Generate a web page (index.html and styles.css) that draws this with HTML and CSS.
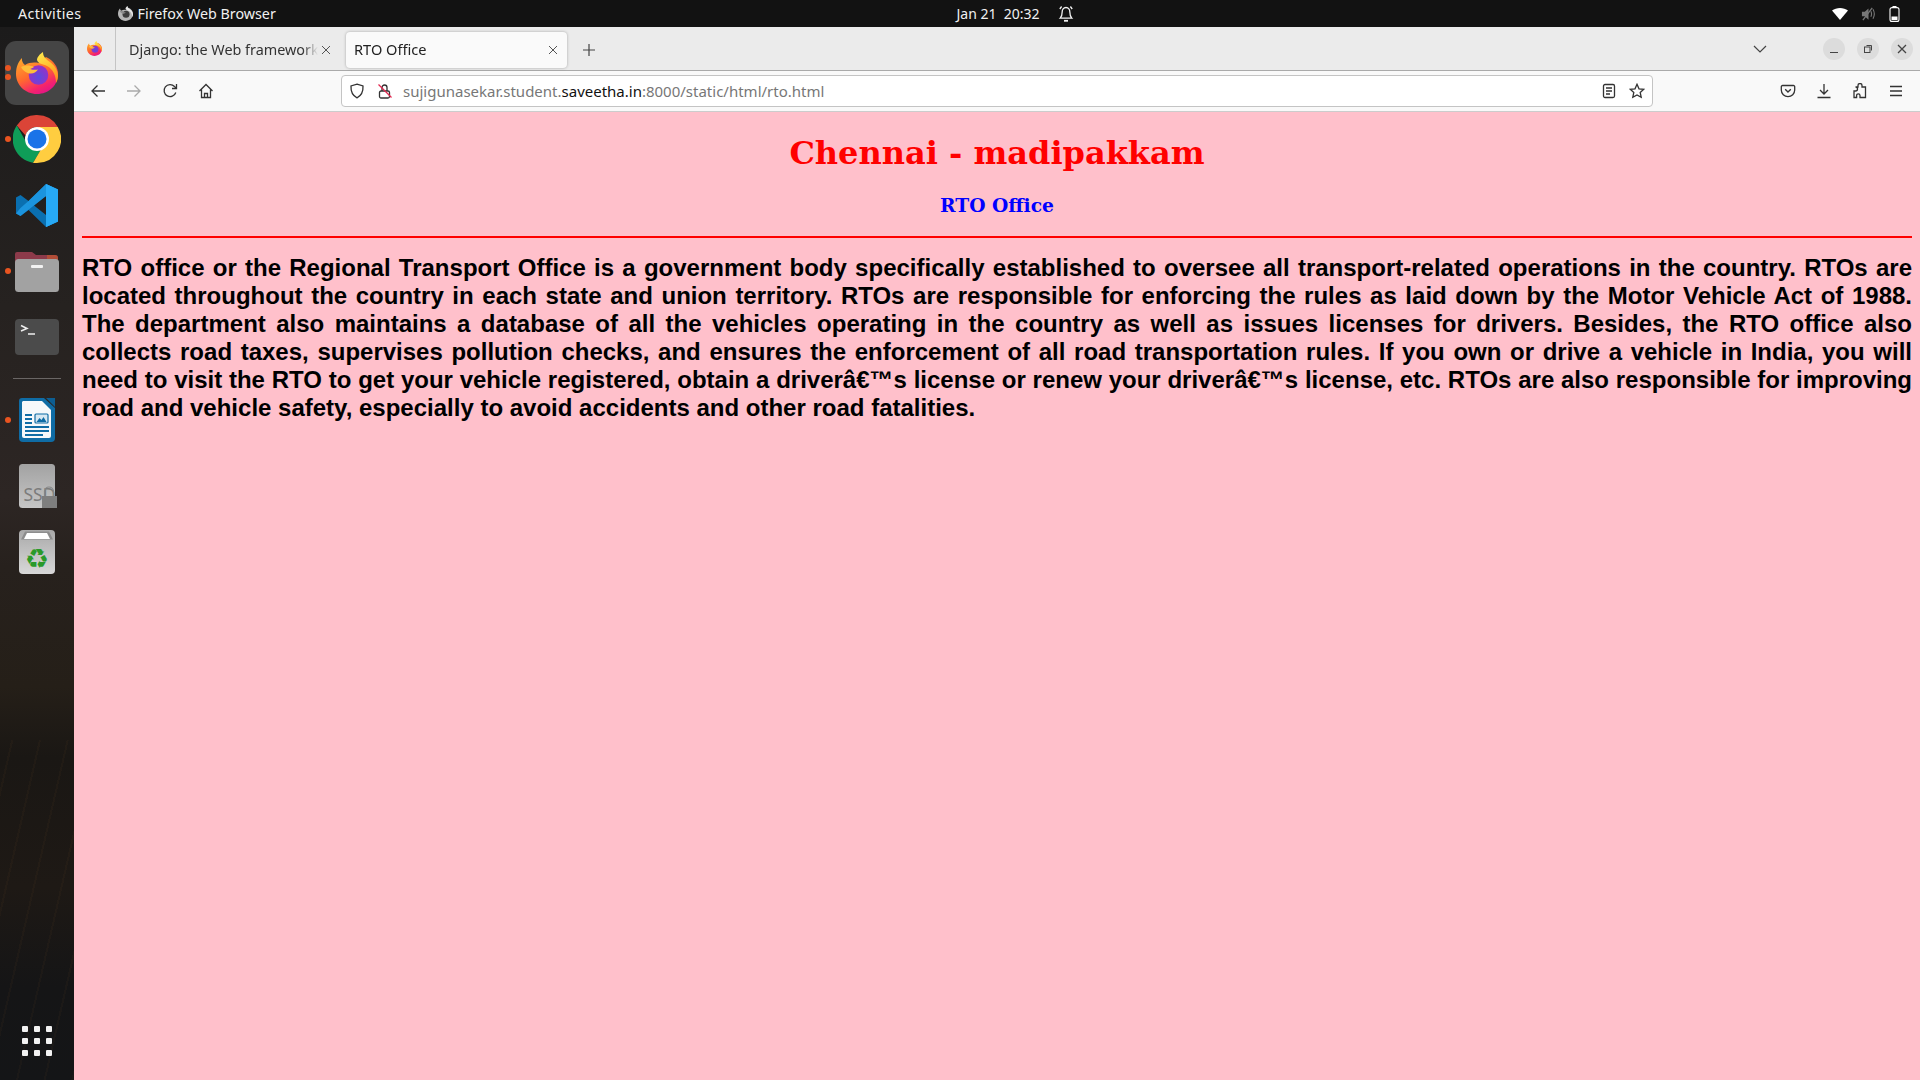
FILE: index.html
```html
<!DOCTYPE html>
<html lang="en">
<head>
  <meta charset="UTF-8">
  <meta name="viewport" content="width=device-width, initial-scale=1.0">
  <title>RTO Office</title>
  <link rel="stylesheet" href="styles.css">
</head>
<body>

  <svg class="defs" aria-hidden="true">
    <defs>
      <linearGradient id="fx-base" x1="0.15" y1="0.1" x2="0.65" y2="1">
        <stop offset="0" stop-color="#ffa02c"/>
        <stop offset="0.45" stop-color="#ff6a2e"/>
        <stop offset="0.8" stop-color="#f5256a"/>
        <stop offset="1" stop-color="#e31587"/>
      </linearGradient>
      <linearGradient id="fx-flame" x1="0.3" y1="0" x2="0.7" y2="1">
        <stop offset="0" stop-color="#ffe64a"/>
        <stop offset="0.6" stop-color="#ffb52a"/>
        <stop offset="1" stop-color="#ff8a20"/>
      </linearGradient>
      <radialGradient id="fx-globe" cx="0.5" cy="0.6" r="0.6">
        <stop offset="0" stop-color="#5b4be0"/>
        <stop offset="1" stop-color="#9a2fc4"/>
      </radialGradient>
      <linearGradient id="disk" x1="0" y1="0" x2="0" y2="1">
        <stop offset="0" stop-color="#a2a2a2"/>
        <stop offset="1" stop-color="#c6c6c6"/>
      </linearGradient>
      <linearGradient id="bin" x1="0" y1="0" x2="0" y2="1">
        <stop offset="0" stop-color="#a9a9a9"/>
        <stop offset="1" stop-color="#d8d8d8"/>
      </linearGradient>

      <symbol id="firefox" viewBox="0 0 42 42">
        <path fill="url(#fx-base)" d="M6 6C5.500 9 7 11.500 9 13c4-2.500 9-3 14-2l7-6c8 4 12 10 12 17 0 11.600-9.400 20-21 20S0 33 0 22C0 15 2 10 6 6z"/>
        <path fill="url(#fx-flame)" d="M27 0c0 5 3 7 7 10 5 4 8 8 8 14 0 3-1 5-2 7 0-7-3-14-9-17-4-2-9-2-10-6 0-3 3-6 6-8z"/>
        <circle cx="22.500" cy="23" r="9.800" fill="url(#fx-globe)"/>
        <path fill="#ffbe3a" d="M5 15c4-2 9-2 13 0-1.500 1-3 1.500-4 2 3 1 6 1 8 .5-2 2.500-4 4-7 4-4 0-8-2.500-10-6.500z"/>
      </symbol>

      <symbol id="firefox-mono" viewBox="0 0 42 42">
        <path fill="#b5b5b5" d="M6 6C5.500 9 7 11.500 9 13c4-2.500 9-3 14-2l7-6c8 4 12 10 12 17 0 11.600-9.400 20-21 20S0 33 0 22C0 15 2 10 6 6z"/>
        <path fill="#e6e6e6" d="M27 0c0 5 3 7 7 10 5 4 8 8 8 14 0 3-1 5-2 7 0-7-3-14-9-17-4-2-9-2-10-6 0-3 3-6 6-8z"/>
        <circle cx="22.500" cy="23" r="9.800" fill="#3c3c3c"/>
        <path fill="#8c8c8c" d="M5 15c4-2 9-2 13 0-1.500 1-3 1.500-4 2 3 1 6 1 8 .5-2 2.500-4 4-7 4-4 0-8-2.500-10-6.500z"/>
      </symbol>
    </defs>
  </svg>

  <header class="topbar">
    <div class="topbar-left">
      <span class="activities">Activities</span>
      <span class="app-menu">
        <svg class="app-menu-icon"><use href="#firefox-mono"/></svg>
        Firefox Web Browser
      </span>
    </div>
    <div class="clock">
      <span>Jan 21&nbsp; 20:32</span>
      <svg class="bell" viewBox="0 0 16 18" fill="none" stroke="#f2f2f2" stroke-width="1.300">
        <path d="M8 2.500c-2.600 0-3.800 2-3.800 4.300 0 3-.7 5-2 6.400h11.600c-1.300-1.400-2-3.400-2-6.400 0-2.300-1.200-4.300-3.800-4.300z"/>
        <path d="M6 15.800h4" stroke-width="1.800"/>
        <path d="M3.600 1.500 1.800 4M12.400 1.500 14.200 4"/>
      </svg>
    </div>
    <div class="tray">
      <svg class="wifi" viewBox="0 0 16 12"><path fill="#fff" d="M0 2.600C2.200.9 5 0 8 0s5.800.9 8 2.600L8 12z"/></svg>
      <svg class="volume" viewBox="0 0 16 14" fill="none" stroke="#777">
        <path fill="#777" stroke="none" d="M1 4.500h3L8 1v12L4 9.500H1z"/>
        <path d="M10.500 4c1 2 1 4 0 6M12.800 2c1.700 3 1.700 7 0 10" stroke-width="1.200"/>
        <path d="M2 13.500 12 .5" stroke-width="1.400"/>
      </svg>
      <svg class="battery" viewBox="0 0 11 16" fill="none">
        <path d="M3.500.5h4" stroke="#fff"/>
        <rect x="1" y="1.600" width="9" height="13.800" rx="2" stroke="#fff" stroke-width="1.100"/>
        <rect x="2.500" y="10.500" width="6" height="3.500" fill="#fff"/>
      </svg>
    </div>
  </header>

  <div class="desktop">
    <aside class="dock">
      <div class="dock-item active">
        <i class="run-dot"></i><i class="run-dot"></i>
        <svg class="icon-firefox"><use href="#firefox"/></svg>
      </div>
      <div class="dock-item">
        <i class="run-dot"></i>
        <svg class="icon-chrome" viewBox="0 0 48 48">
          <path fill="#db4437" d="M24 0a24 24 0 0 1 20.800 12H24a12 12 0 0 0-11.500 8.500L3.800 10.500A24 24 0 0 1 24 0z"/>
          <path fill="#0f9d58" d="M3.800 10.500 14 28.500a12 12 0 0 0 13.500 7.100L20 47.700A24 24 0 0 1 3.800 10.500z"/>
          <path fill="#ffcd40" d="M44.800 12A24 24 0 0 1 24 48h-4l10-17a12 12 0 0 0-6-19z"/>
          <circle cx="24" cy="24" r="12" fill="#fff"/>
          <circle cx="24" cy="24" r="9.500" fill="#1a73e8"/>
        </svg>
      </div>
      <div class="dock-item">
        <svg class="icon-code" viewBox="0 0 42 43">
          <path fill="#0a6fb0" d="M30 0 12.500 17 4.500 11 0 13.500v16L4.500 32l8-6L30 43l12-5.500v-32zM30 12v19l-12-9.500z"/>
          <path fill="#1f9be6" d="M30 0l12 5.500v32L30 43zM0 29.500l4.500 2.500L30 12V0L12.500 17 4.500 24z" opacity=".85"/>
          <path fill="#27a9f5" d="M30 0l12 5.500v32L30 43z"/>
        </svg>
      </div>
      <div class="dock-item">
        <i class="run-dot"></i>
        <svg class="icon-files" viewBox="0 0 44 41">
          <path fill="#8c3a4a" d="M2 1h15l4 3h19a3 3 0 0 1 3 3v20H0V3a2 2 0 0 1 2-2z"/>
          <path fill="#c0562f" d="M32 4h8a3 3 0 0 1 3 3v20H32z" opacity=".7"/>
          <rect x="0" y="8" width="44" height="33" rx="3.500" fill="#a2a2a2"/>
          <rect x="16" y="14" width="12" height="3" rx="1" fill="#f2f2f2"/>
        </svg>
      </div>
      <div class="dock-item">
        <svg class="icon-term" viewBox="0 0 44 36">
          <rect width="44" height="36" rx="4" fill="#4b4b4b"/>
          <path d="M6 6.500 12 9.500 6 12" fill="none" stroke="#eee" stroke-width="1.500"/>
          <path d="M13 15h7" stroke="#eee" stroke-width="1.500"/>
        </svg>
      </div>
      <hr class="dock-sep">
      <div class="dock-item">
        <i class="run-dot"></i>
        <svg class="icon-writer" viewBox="0 0 36 44">
          <path fill="#0f6ca5" d="M3 0h22l11 10v30a4 4 0 0 1-4 4H4a4 4 0 0 1-4-4V3a3 3 0 0 1 3-3z"/>
          <path fill="#0d5e92" d="M27 0h9v9z"/>
          <path fill="#f6f8fa" d="M4 3h19l9 9v26a2 2 0 0 1-2 2H5a2 2 0 0 1-2-2V4z"/>
          <g fill="#0f6ca5">
            <rect x="6" y="16" width="7" height="2"/><rect x="6" y="20" width="7" height="2"/>
            <rect x="6" y="24" width="7" height="2"/><rect x="6" y="28" width="24" height="2"/>
            <rect x="6" y="32" width="24" height="2"/><rect x="6" y="36" width="18" height="2"/>
          </g>
          <rect x="16" y="16" width="13" height="9" rx="1" fill="#d8e8f2" stroke="#0f6ca5" stroke-width="1.200"/>
          <path fill="#0f6ca5" d="M17.500 24l3-4 2 2 2-3 3 5z"/>
        </svg>
      </div>
      <div class="dock-item">
        <svg class="icon-ssd" viewBox="0 0 38 44">
          <rect width="36" height="44" rx="3.500" fill="url(#disk)"/>
          <text x="4.500" y="37" class="ssd-label">SSD</text>
          <path d="M25.500 32v-4.500a4.500 4.500 0 0 1 9 0V32" fill="none" stroke="#858585" stroke-width="1.200"/>
          <rect x="23" y="32" width="15" height="12" fill="#7e7e7e"/>
        </svg>
      </div>
      <div class="dock-item">
        <svg class="icon-trash" viewBox="0 0 36 44">
          <rect width="36" height="44" rx="4" fill="url(#bin)"/>
          <path d="M6 1.500h24l4 8H2z" fill="#8d8d8d"/>
          <path d="M8 3h20l3 6H5z" fill="#fff"/>
          <text x="18" y="38" class="recycle">♻</text>
        </svg>
      </div>
      <div class="app-grid">
        <i></i><i></i><i></i><i></i><i></i><i></i><i></i><i></i><i></i>
      </div>
    </aside>

    <div class="browser">
      <div class="tabbar">
        <div class="tab-fav"><svg class="fav-icon"><use href="#firefox"/></svg></div>
        <div class="tab">
          <span class="tab-title">Django: the Web framework</span>
          <svg class="tab-close" viewBox="0 0 10 10"><path d="M1 1l8 8M9 1 1 9"/></svg>
        </div>
        <div class="tab current">
          <span class="tab-title">RTO Office</span>
          <svg class="tab-close" viewBox="0 0 10 10"><path d="M1 1l8 8M9 1 1 9"/></svg>
        </div>
        <svg class="new-tab" viewBox="0 0 12 12"><path d="M6 0v12M0 6h12"/></svg>
        <svg class="tab-list" viewBox="0 0 14 8"><path d="M1 1l6 6 6-6"/></svg>
        <div class="win-btns">
          <span class="win-btn"><svg viewBox="0 0 12 12"><path d="M2 9.500h8"/></svg></span>
          <span class="win-btn"><svg viewBox="0 0 12 12"><rect x="2.500" y="4" width="5.500" height="5.500"/><path d="M4.500 2.500h5v5"/></svg></span>
          <span class="win-btn"><svg viewBox="0 0 12 12"><path d="M2 2l8 8M10 2l-8 8" stroke-width="1.300"/></svg></span>
        </div>
      </div>

      <div class="toolbar">
        <svg class="tool back" viewBox="0 0 16 16"><path d="M15 8H2M7.500 2.500 2 8l5.500 5.500"/></svg>
        <svg class="tool forward" viewBox="0 0 16 16"><path d="M1 8h13M8.500 2.500 14 8l-5.500 5.500"/></svg>
        <svg class="tool reload" viewBox="0 0 16 16"><path d="M13.800 9.500A6 6 0 1 1 12.500 3.500L14 5"/><path d="M14.500 1v4.500H10"/></svg>
        <svg class="tool home" viewBox="0 0 16 16"><path d="M1.500 8 8 1.500 14.500 8M3.500 6.500V14.500h9V6.500M6.500 14.500v-4h3v4"/></svg>
        <div class="urlbar">
          <svg class="url-icon" viewBox="0 0 16 16"><path d="M8 1.200 14 3c.3 5.500-1.500 9.500-6 11.800C3.500 12.500 1.700 8.500 2 3z"/></svg>
          <svg class="url-icon lock" viewBox="0 0 16 16">
            <rect x="2.500" y="8" width="10" height="7" rx="1.500"/>
            <path d="M5 8V4.500a2.500 2.500 0 0 1 5 0V8"/>
            <path class="lock-slash" d="M1.500 1.500l13 13"/>
          </svg>
          <span class="url-text">sujigunasekar.student.<b>saveetha.in</b>:8000/static/html/rto.html</span>
          <svg class="tool reader" viewBox="0 0 16 16"><rect x="2.500" y="1.500" width="11" height="13" rx="1.500"/><path d="M5 5h6M5 8h6M5 11h4"/></svg>
          <svg class="tool star" viewBox="0 0 16 16"><path d="M8 1.300l2 4.500 4.800.5-3.600 3.200 1 4.800L8 11.900l-4.200 2.400 1-4.800L1.200 6.300 6 5.800z"/></svg>
        </div>
        <svg class="tool pocket" viewBox="0 0 16 16"><path d="M2.500 2.500h11a1.200 1.200 0 0 1 1.200 1.200V7a6.700 6.700 0 0 1-13.400 0V3.700a1.200 1.200 0 0 1 1.200-1.200z"/><path d="M5.200 6.200 8 9l2.800-2.800"/></svg>
        <svg class="tool download" viewBox="0 0 16 16"><path d="M8 1v9.500M4 7l4 4 4-4M1.500 14.500h13"/></svg>
        <svg class="tool extensions" viewBox="0 0 16 16"><path d="M6 2.500a2 2 0 0 1 4 0V4h3.500v10.500H8v-2a1.700 1.700 0 0 0-3.400 0v2H2V8h1.500a2 2 0 0 0 0-4H6z"/></svg>
        <svg class="tool menu" viewBox="0 0 16 16"><path d="M2 3.500h12M2 8h12M2 12.500h12"/></svg>
      </div>

      <main class="page">
        <h1>Chennai - madipakkam</h1>
        <h3>RTO Office</h3>
        <hr class="rule">
        <h2>RTO office or the Regional Transport Office is a government body specifically established to oversee all transport-related operations in the country. RTOs are located throughout the country in each state and union territory. RTOs are responsible for enforcing the rules as laid down by the Motor Vehicle Act of 1988. The&nbsp;department also maintains a database of all the vehicles operating in the country as well as issues licenses for drivers. Besides, the RTO office also collects road taxes, supervises pollution checks, and ensures the enforcement of all road transportation rules. If you own or drive a vehicle in India, you will need to visit the RTO to get your vehicle registered, obtain a driverâ€™s license or renew your driverâ€™s license, etc. RTOs are also responsible for improving road and vehicle safety, especially to avoid accidents and other road fatalities.</h2>
      </main>
    </div>
  </div>

</body>
</html>
```

FILE: styles.css
```css
html, body {
  margin: 0;
  height: 100%;
}
body {
  display: flex;
  flex-direction: column;
  overflow: hidden;
  font-family: "Noto Sans", sans-serif;
  background: #121212;
}
.defs {
  position: absolute;
  width: 0;
  height: 0;
}

/* top bar */
.topbar {
  height: 27px;
  flex: none;
  display: grid;
  grid-template-columns: 1fr auto 1fr;
  align-items: center;
  background: #121212;
  color: #f0f0f0;
  font-size: 14.300px;
}
.topbar-left {
  display: flex;
  align-items: center;
  padding-left: 18px;
  gap: 36px;
}
.activities {
  letter-spacing: .4px;
}
.app-menu {
  display: flex;
  align-items: center;
  gap: 5px;
}
.app-menu-icon {
  width: 15px;
  height: 15px;
}
.clock {
  display: flex;
  align-items: center;
  gap: 18px;
  margin-left: 110px;
  font-size: 14px;
}
.bell {
  width: 16px;
  height: 18px;
}
.tray {
  display: flex;
  justify-content: flex-end;
  align-items: center;
  gap: 13px;
  padding-right: 20px;
}
.wifi {
  width: 16px;
  height: 12px;
}
.volume {
  width: 15px;
  height: 14px;
}
.battery {
  width: 11px;
  height: 16px;
}

.desktop {
  flex: 1;
  display: flex;
  min-height: 0;
}

/* dock */
.dock {
  width: 74px;
  flex: none;
  display: flex;
  flex-direction: column;
  align-items: center;
  padding-top: 13px;
  box-sizing: border-box;
  background:
    repeating-linear-gradient(103deg, transparent 0 11px, rgba(120, 78, 36, .07) 11px 13px, transparent 13px 27px) 0 100% / 100% 340px no-repeat,
    linear-gradient(180deg, #1c1b1b 0, #262220 280px, #2d2624 470px, #27211d 540px, #251f18 660px, #1a1714 730px, #1e1915 860px, #151516 960px, #141517 100%);
}
.dock-item {
  position: relative;
  width: 74px;
  height: 66px;
  flex: none;
  display: flex;
  align-items: center;
  justify-content: center;
}
.dock-item.active::before {
  content: "";
  position: absolute;
  left: 5px;
  top: 1px;
  width: 64px;
  height: 64px;
  border-radius: 11px;
  background: #454545;
}
.dock-item svg {
  position: relative;
}
.run-dot {
  position: absolute;
  left: 5px;
  top: 30px;
  width: 6px;
  height: 6px;
  border-radius: 50%;
  background: #e95420;
}
.run-dot:first-child:nth-last-child(3) {
  top: 25px;
}
.run-dot:nth-child(2):nth-last-child(2) {
  top: 34px;
}
.icon-firefox {
  width: 42px;
  height: 42px;
}
.icon-chrome {
  width: 48px;
  height: 48px;
}
.icon-code {
  width: 42px;
  height: 43px;
}
.icon-files {
  width: 44px;
  height: 41px;
}
.icon-term {
  width: 44px;
  height: 36px;
}
.icon-writer {
  width: 36px;
  height: 44px;
}
.icon-ssd {
  width: 38px;
  height: 44px;
  margin-left: 2px;
}
.ssd-label {
  font-family: "Noto Sans", sans-serif;
  font-size: 17.500px;
  fill: #7c7c7c;
}
.icon-trash {
  width: 36px;
  height: 44px;
}
.recycle {
  font-family: "DejaVu Sans", sans-serif;
  font-size: 27px;
  text-anchor: middle;
  fill: #2a9a2a;
}
.dock-sep {
  width: 48px;
  height: 1px;
  margin: 8px 0;
  flex: none;
  border: 0;
  background: #6a6665;
}
.app-grid {
  margin-top: auto;
  margin-bottom: 24px;
  display: grid;
  grid-template-columns: repeat(3, 6px);
  grid-auto-rows: 6px;
  gap: 6px;
}
.app-grid i {
  border-radius: 1px;
  background: #f2f2f2;
}

/* browser */
.browser {
  flex: 1;
  min-width: 0;
  display: flex;
  flex-direction: column;
}
.tabbar {
  height: 43px;
  flex: none;
  display: flex;
  align-items: center;
  background: #ebebeb;
  border-bottom: 1px solid #aaa;
  font-size: 14.400px;
  color: #333;
}
.tab-fav {
  width: 42px;
  align-self: stretch;
  display: flex;
  align-items: center;
  justify-content: center;
  border-right: 1px solid #c4c4c4;
  box-sizing: border-box;
}
.fav-icon {
  width: 15px;
  height: 15px;
}
.tab {
  width: 222px;
  height: 36px;
  flex: none;
  box-sizing: border-box;
  display: flex;
  align-items: center;
  gap: 3px;
  margin-top: 2px;
  padding: 0 7px 0 13px;
}
.tab.current {
  width: 221px;
  margin-left: 8px;
  padding: 0 9px 0 8px;
  border-radius: 4px;
  background: #fafafa;
  box-shadow: 0 0 3px rgba(0, 0, 0, .3);
  color: #222;
  font-size: 14.600px;
}
.tab-title {
  flex: 1;
  min-width: 0;
  padding-bottom: 1px;
  white-space: nowrap;
  -webkit-mask-image: linear-gradient(90deg, #000 92%, transparent);
  mask-image: linear-gradient(90deg, #000 92%, transparent);
}
.tab-close {
  width: 10px;
  height: 10px;
  flex: none;
  fill: none;
  stroke: #555;
}
.new-tab {
  width: 12px;
  height: 12px;
  margin-top: 2px;
  margin-left: 16px;
  fill: none;
  stroke: #444;
  stroke-width: 1.200;
}
.tab-list {
  width: 14px;
  height: 8px;
  margin-left: auto;
  fill: none;
  stroke: #444;
  stroke-width: 1.200;
}
.win-btns {
  display: flex;
  gap: 12px;
  margin-left: 56px;
  margin-right: 7px;
}
.win-btn {
  width: 22px;
  height: 22px;
  border-radius: 50%;
  background: #dcdcdc;
  display: flex;
  align-items: center;
  justify-content: center;
}
.win-btn svg {
  width: 12px;
  height: 12px;
  fill: none;
  stroke: #444;
}

.toolbar {
  height: 41px;
  flex: none;
  box-sizing: border-box;
  display: flex;
  align-items: center;
  padding-left: 16px;
  background: #f9f9f9;
  border-bottom: 1px solid #ccc;
}
.tool {
  width: 16px;
  height: 16px;
  flex: none;
  fill: none;
  stroke: #333;
  stroke-width: 1.300;
}
.forward {
  stroke: #aaa;
  margin-left: 20px;
}
.reload {
  margin-left: 20px;
}
.home {
  margin-left: 20px;
}
.urlbar {
  width: 1312px;
  height: 32px;
  margin-left: 127px;
  flex: none;
  box-sizing: border-box;
  display: flex;
  align-items: center;
  padding: 0 7px 0 7px;
  background: #fff;
  border: 1px solid #c4c4c4;
  border-radius: 4px;
  font-size: 15px;
  color: #777;
}
.url-icon {
  width: 16px;
  height: 16px;
  flex: none;
  fill: none;
  stroke: #333;
  stroke-width: 1.300;
}
.url-icon.lock {
  margin-left: 12px;
}
.lock-slash {
  stroke: #e22850;
}
.url-text {
  margin-left: 10px;
  flex: 1;
}
.url-text b {
  font-weight: normal;
  color: #111;
}
.star {
  margin-left: 12px;
}
.pocket {
  margin-left: 127px;
}
.download {
  margin-left: 20px;
}
.extensions {
  margin-left: 20px;
}
.menu {
  margin-left: 20px;
}

/* page */
.page {
  flex: 1;
  min-height: 0;
  padding: 0 8px;
  overflow: hidden;
  background: #ffc0cb;
}
.page h1 {
  margin: 22px 0 0;
  font: bold 32px "DejaVu Serif", serif;
  color: #f00;
  text-align: center;
}
.page h3 {
  margin: 22px 0 0;
  font: bold 18.720px "DejaVu Serif", serif;
  color: #00f;
  text-align: center;
}
.rule {
  height: 2px;
  margin: 20px 0 0;
  border: 0;
  background: #f00;
}
.page h2 {
  margin: 16px 0 0;
  font: bold 24px/28px "Liberation Sans", sans-serif;
  color: #000;
  text-align: justify;
}
```
